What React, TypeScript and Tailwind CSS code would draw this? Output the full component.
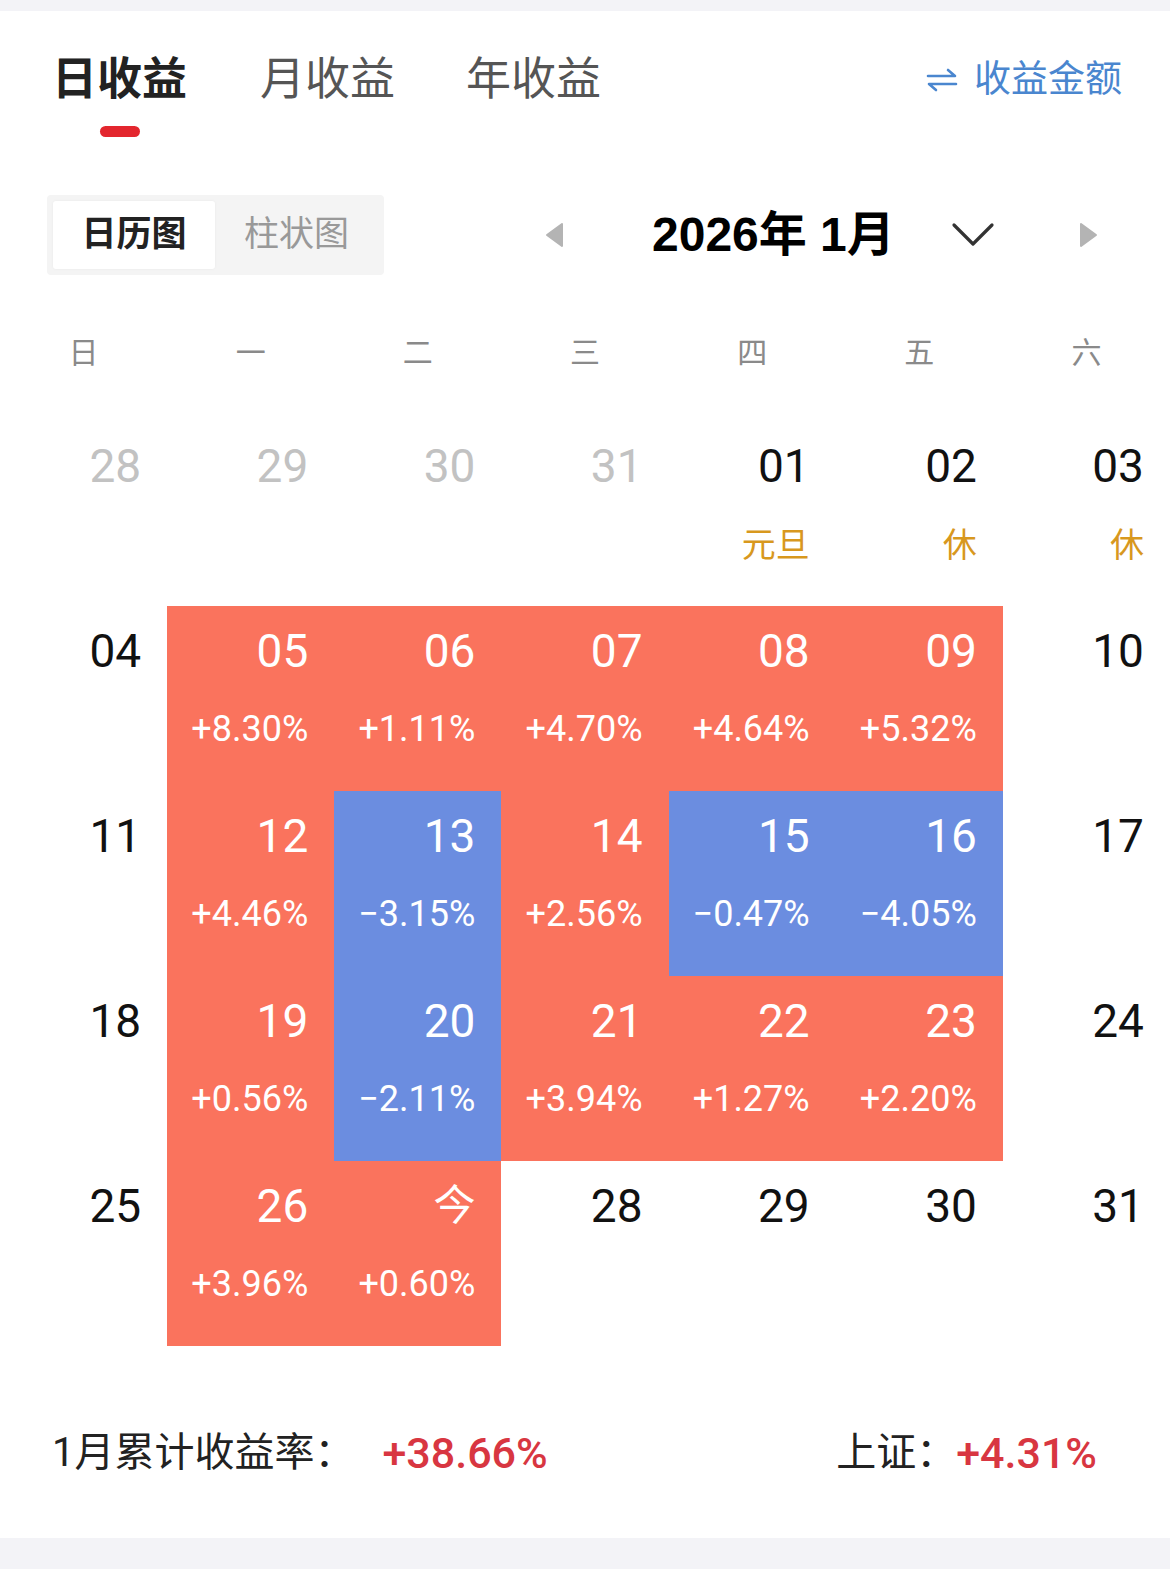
import React from 'react'

type Cell = {
	day: string
	tone?: 'up' | 'down' | 'past'
	pct?: string
	tag?: string
}

const weekdays = ['日', '一', '二', '三', '四', '五', '六']

const rows: Cell[][] = [
	[
		{ day: '28', tone: 'past' },
		{ day: '29', tone: 'past' },
		{ day: '30', tone: 'past' },
		{ day: '31', tone: 'past' },
		{ day: '01', tag: '元旦' },
		{ day: '02', tag: '休' },
		{ day: '03', tag: '休' },
	],
	[
		{ day: '04' },
		{ day: '05', tone: 'up', pct: '+8.30%' },
		{ day: '06', tone: 'up', pct: '+1.11%' },
		{ day: '07', tone: 'up', pct: '+4.70%' },
		{ day: '08', tone: 'up', pct: '+4.64%' },
		{ day: '09', tone: 'up', pct: '+5.32%' },
		{ day: '10' },
	],
	[
		{ day: '11' },
		{ day: '12', tone: 'up', pct: '+4.46%' },
		{ day: '13', tone: 'down', pct: '−3.15%' },
		{ day: '14', tone: 'up', pct: '+2.56%' },
		{ day: '15', tone: 'down', pct: '−0.47%' },
		{ day: '16', tone: 'down', pct: '−4.05%' },
		{ day: '17' },
	],
	[
		{ day: '18' },
		{ day: '19', tone: 'up', pct: '+0.56%' },
		{ day: '20', tone: 'down', pct: '−2.11%' },
		{ day: '21', tone: 'up', pct: '+3.94%' },
		{ day: '22', tone: 'up', pct: '+1.27%' },
		{ day: '23', tone: 'up', pct: '+2.20%' },
		{ day: '24' },
	],
	[
		{ day: '25' },
		{ day: '26', tone: 'up', pct: '+3.96%' },
		{ day: '今', tone: 'up', pct: '+0.60%' },
		{ day: '28' },
		{ day: '29' },
		{ day: '30' },
		{ day: '31' },
	],
]

function SwapIcon() {
	return (
		<svg width="32" height="26" viewBox="0 0 32 26" fill="none" stroke="#4a86cf" strokeWidth="2.6" strokeLinecap="round" strokeLinejoin="round">
			<path d="M2 9 H29 L22 3" />
			<path d="M30 17 H3 L10 23" />
		</svg>
	)
}

function Triangle({ dir }: { dir: 'left' | 'right' }) {
	return (
		<svg width="20" height="26" viewBox="0 0 20 26">
			{dir === 'left' ? (
				<path d="M18 2 L3 13 L18 24 Z" fill="#b4b4b4" stroke="#b4b4b4" strokeWidth="2" strokeLinejoin="round" />
			) : (
				<path d="M2 2 L17 13 L2 24 Z" fill="#b4b4b4" stroke="#b4b4b4" strokeWidth="2" strokeLinejoin="round" />
			)}
		</svg>
	)
}

function DayCell({ cell }: { cell: Cell }) {
	const bg =
		cell.tone === 'up' ? 'bg-[#fa735d]' : cell.tone === 'down' ? 'bg-[#6b8de0]' : 'bg-white'
	const color =
		cell.tone === 'up' || cell.tone === 'down'
			? 'text-white'
			: cell.tone === 'past'
				? 'text-[#c2c2c2]'
				: 'text-[#111]'
	const isToday = cell.day === '今'
	return (
		<div className={`h-[185px] flex flex-col items-end pr-[26px] pt-[22px] ${bg} ${color}`}>
			<div className={isToday ? 'text-[42px] leading-[46px]' : 'text-[46px] leading-[46px]'}>{cell.day}</div>
			{cell.pct && <div className="mt-[37px] text-[36px] leading-[36px]">{cell.pct}</div>}
			{cell.tag && <div className="mt-[39px] text-[34px] leading-[34px] text-[#d8981e]">{cell.tag}</div>}
		</div>
	)
}

export default function App() {
	return (
		<div className="w-[1170px] min-h-[1569px] bg-white font-['Roboto','Noto_Sans_CJK_SC',sans-serif] flex flex-col">
			<div className="h-[11px] bg-[#f3f3f7]" />

			{/* tabs */}
			<div className="flex items-start pl-[52px] pr-[48px] mt-[46px]">
				<div className="flex flex-col items-center">
					<div className="text-[45px] leading-[45px] font-bold text-[#222]">日收益</div>
					<div className="mt-[24px] w-[40px] h-[11px] rounded-full bg-[#e3262e]" />
				</div>
				<div className="ml-[73px] text-[45px] leading-[45px] text-[#555]">月收益</div>
				<div className="ml-[71px] text-[45px] leading-[45px] text-[#555]">年收益</div>
				<div className="ml-auto flex items-center gap-[16px] text-[37px] leading-[45px] text-[#4a86cf]">
					<SwapIcon />
					<span>收益金额</span>
				</div>
			</div>

			{/* view switch + month nav */}
			<div className="flex items-center pl-[47px] mt-[58px]">
				<div className="flex p-[6px] bg-[#f4f4f4] rounded-[4px]">
					<div className="w-[162px] h-[68px] flex items-center justify-center bg-white rounded-[3px] shadow-[0_0_3px_rgba(0,0,0,0.05)] text-[35px] font-bold text-[#222]">
						日历图
					</div>
					<div className="w-[163px] h-[68px] flex items-center justify-center text-[35px] text-[#999]">
						柱状图
					</div>
				</div>
				<div className="ml-[160px]">
					<Triangle dir="left" />
				</div>
				<div className="ml-[88px] text-[48px] leading-[50px] font-bold text-black font-['Liberation_Sans','Noto_Sans_CJK_SC',sans-serif]">
					2026年 1月
				</div>
				<div className="ml-[56px]">
					<svg width="44" height="26" viewBox="0 0 44 26" fill="none" stroke="#333" strokeWidth="3.2" strokeLinecap="round" strokeLinejoin="round">
						<path d="M3 3 L22 22 L41 3" />
					</svg>
				</div>
				<div className="ml-[84px]">
					<Triangle dir="right" />
				</div>
			</div>

			{/* weekdays */}
			<div className="grid grid-cols-7 mt-[56px] h-[44px] items-center">
				{weekdays.map((w) => (
					<div key={w} className="text-center text-[30px] leading-[44px] text-[#8a8a8a]">
						{w}
					</div>
				))}
			</div>

			{/* calendar */}
			<div className="grid grid-cols-7 mt-[46px]">
				{rows.flat().map((c, i) => (
					<DayCell key={i} cell={c} />
				))}
			</div>

			{/* summary */}
			<div className="h-[192px] flex items-start pt-[86px] pl-[52px] pr-[73px]">
				<div className="text-[40px] leading-[42px] text-[#222]">1月累计收益率：</div>
				<div className="ml-[28px] text-[43px] leading-[42px] font-medium text-[#d83641]">+38.66%</div>
				<div className="ml-auto text-[40px] leading-[42px] text-[#222]">上证：</div>
				<div className="text-[43px] leading-[42px] font-medium text-[#d83641]">+4.31%</div>
			</div>

			<div className="flex-1 bg-[#f3f3f7]" />
		</div>
	)
}
